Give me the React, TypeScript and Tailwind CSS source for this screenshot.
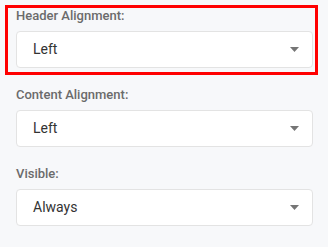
import React from "react";

type FieldProps = {
  label: string;
  value: string;
};

function Arrow() {
  return (
    <svg width="9" height="5" viewBox="0 0 9 5" className="shrink-0">
      <polygon points="0,0 9,0 4.5,5" fill="#757575" />
    </svg>
  );
}

function SelectField({ label, value }: FieldProps) {
  return (
    <div className="flex flex-col">
      <label className="mb-[7px] text-[13px] leading-4 font-medium text-[#6b6b6b]">{label}</label>
      <div className="flex h-[37px] items-center justify-between rounded-[4px] border border-[#e3e3e3] bg-white pl-4 pr-[13px]">
        <span className="text-[14px] text-[#333333]">{value}</span>
        <Arrow />
      </div>
    </div>
  );
}

export default function App() {
  return (
    <div
      className="flex h-[247px] w-[328px] flex-col gap-[19px] bg-[#f7f8fa] pl-4 pr-[15px] pt-2"
      style={{ fontFamily: "Roboto, 'Liberation Sans', sans-serif" }}
    >
      <div className="relative">
        <SelectField label="Header Alignment:" value="Left" />
        {/* highlight around the selected field */}
        <div className="pointer-events-none absolute -left-[11px] -right-[5px] -top-[3px] -bottom-[7px] border-[3px] border-[#ff0000]" />
      </div>
      <SelectField label="Content Alignment:" value="Left" />
      <SelectField label="Visible:" value="Always" />
    </div>
  );
}
